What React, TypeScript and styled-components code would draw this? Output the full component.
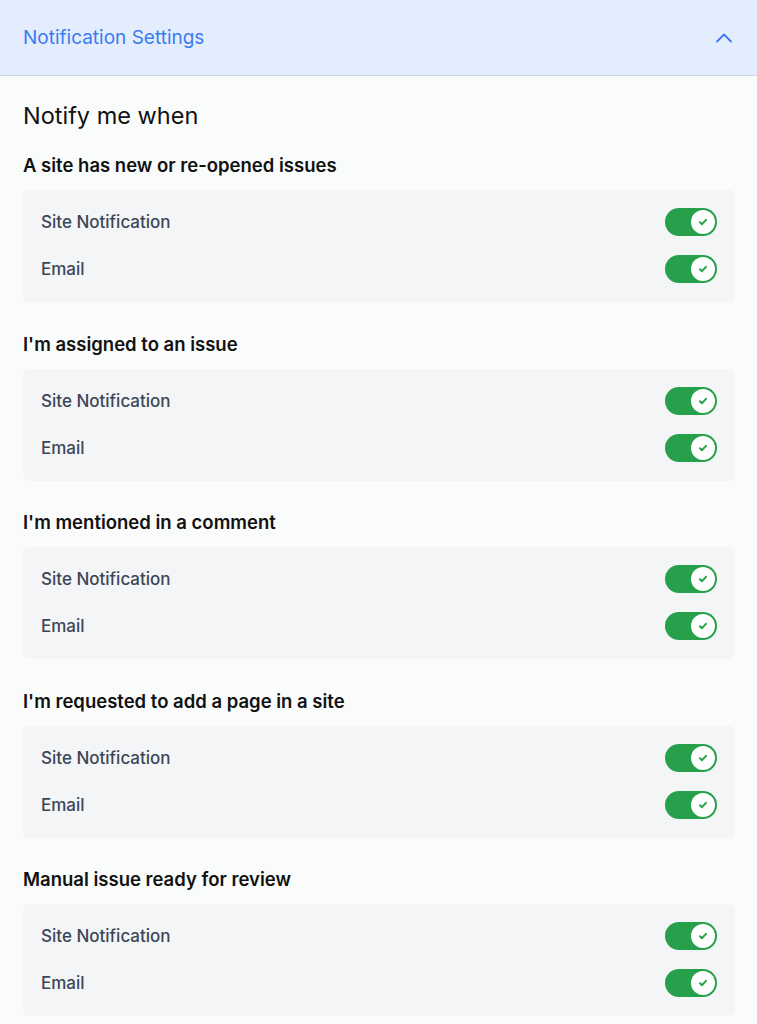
import styled, { createGlobalStyle } from "styled-components";

const GlobalStyle = createGlobalStyle`
  * { box-sizing: border-box; }
  body {
    margin: 0;
    background: #fafcfb;
    font-family: Inter, "Noto Sans", "Liberation Sans", sans-serif;
  }
`

const Panel = styled.div`
  width: 757px;
  min-height: 1024px;
  background: #fafcfb;
`
const Header = styled.div`
  height: 76px;
  display: flex;
  align-items: center;
  justify-content: space-between;
  padding: 0 24px 0 23px;
  background: #e3edfd;
  border-bottom: 1px solid #cdd6e3;
`
const HeaderTitle = styled.span`
  font-size: 19px;
  color: #3b7bf0;
  font-weight: 400;
`
const Body = styled.div`
  padding: 25px 22px 0 23px;
`
const Title = styled.h2`
  margin: 0 0 22px;
  font-size: 23.5px;
  line-height: 30px;
  font-weight: 400;
  color: #111;
`
const Section = styled.section`
  margin-bottom: 29.5px;
`
const SectionTitle = styled.h3`
  margin: 0 0 13px;
  font-size: 18.5px;
  line-height: 24px;
  font-weight: 600;
  color: #111;
`
const Card = styled.div`
  background: #f4f5f6;
  border-radius: 6px;
  padding: 12px 18px 13px;
  display: flex;
  flex-direction: column;
  gap: 7px;
`
const Row = styled.div`
  height: 40px;
  display: flex;
  align-items: center;
  justify-content: space-between;
`
const Label = styled.span`
  font-size: 17px;
  font-weight: 500;
  color: #3d4656;
`
const Toggle = styled.button<{ $on: boolean }>`
  width: 52px;
  height: 28px;
  border: none;
  padding: 2px;
  border-radius: 14px;
  background: ${(p) => (p.$on ? "#26a04b" : "#cbd2d9")};
  display: flex;
  justify-content: ${(p) => (p.$on ? "flex-end" : "flex-start")};
  cursor: pointer;
`
const Knob = styled.span`
  width: 24px;
  height: 24px;
  border-radius: 50%;
  background: #fff;
  display: flex;
  align-items: center;
  justify-content: center;
`

const Check = () => (
  <svg width="12" height="12" viewBox="0 0 12 12" fill="none">
    <path d="M3 6.2l2 2 4-4.4" stroke="#26a04b" strokeWidth="2" strokeLinecap="round" strokeLinejoin="round" />
  </svg>
)

const ChevronUp = () => (
  <svg width="18" height="12" viewBox="0 0 18 12" fill="none">
    <path d="M2 9.5l7-7 7 7" stroke="#3b7bf0" strokeWidth="1.8" strokeLinecap="round" strokeLinejoin="round" />
  </svg>
)

const sections = [
  "A site has new or re-opened issues",
  "I'm assigned to an issue",
  "I'm mentioned in a comment",
  "I'm requested to add a page in a site",
  "Manual issue ready for review",
]

function App() {
  return (
    <Panel>
      <GlobalStyle />
      <Header>
        <HeaderTitle>Notification Settings</HeaderTitle>
        <ChevronUp />
      </Header>
      <Body>
        <Title>Notify me when</Title>
        {sections.map((s) => (
          <Section key={s}>
            <SectionTitle>{s}</SectionTitle>
            <Card>
              {["Site Notification", "Email"].map((l) => (
                <Row key={l}>
                  <Label>{l}</Label>
                  <Toggle $on={true} aria-label={l}>
                    <Knob>
                      <Check />
                    </Knob>
                  </Toggle>
                </Row>
              ))}
            </Card>
          </Section>
        ))}
      </Body>
    </Panel>
  )
}
export default App
